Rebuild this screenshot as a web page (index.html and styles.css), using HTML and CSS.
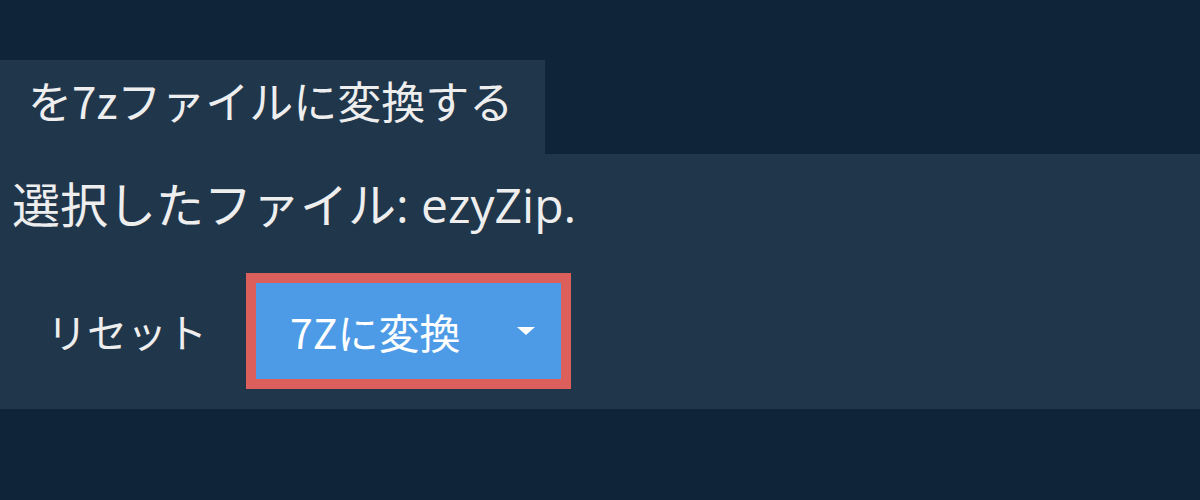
FILE: index.html
```html
<!DOCTYPE html>
<html lang="ja">
<head>
<meta charset="utf-8">
<link rel="stylesheet" href="styles.css">
</head>
<body>
<div class="page">
  <div class="tab">を7zファイルに変換する</div>
  <div class="panel">
    <div class="file">選択したファイル: ezyZip.</div>
    <div class="actions">
      <a class="reset">リセット</a>
      <div class="convert">
        <span class="label">7Zに変換</span>
        <span class="caret"></span>
      </div>
    </div>
  </div>
</div>
</body>
</html>
```
FILE: styles.css
```css
html, body {
  margin: 0;
  padding: 0;
  background: #0f2339;
  width: 1200px;
  height: 500px;
  overflow: hidden;
}
.page {
  padding-top: 60px;
  font-family: "Noto Sans CJK JP", "Noto Sans", sans-serif;
  color: #eeeeee;
}
.tab {
  width: 545px;
  height: 94px;
  box-sizing: border-box;
  background: #20364b;
  padding-left: 28px;
  font-size: 44px;
  line-height: 80px;
}
.panel {
  background: #20364b;
  height: 255px;
  box-sizing: border-box;
  padding: 16px 0 0 12px;
}
.file {
  font-size: 48px;
  line-height: 70px;
  font-family: "Open Sans", "Noto Sans CJK JP", sans-serif;
}
.actions {
  display: flex;
  align-items: center;
  margin-top: 33px;
}
.reset {
  font-size: 40px;
  margin-left: 35px;
  margin-right: 39px;
}
.convert {
  width: 325px;
  height: 116px;
  box-sizing: border-box;
  border: 10px solid #dc5f5c;
  background: #4d9be6;
  display: flex;
  align-items: center;
  padding-left: 34px;
  color: #ffffff;
}
.label {
  font-size: 41px;
}
.caret {
  width: 0;
  height: 0;
  border-left: 9px solid transparent;
  border-right: 9px solid transparent;
  border-top: 8px solid #ffffff;
  margin-left: auto;
  margin-right: 26px;
}
```
